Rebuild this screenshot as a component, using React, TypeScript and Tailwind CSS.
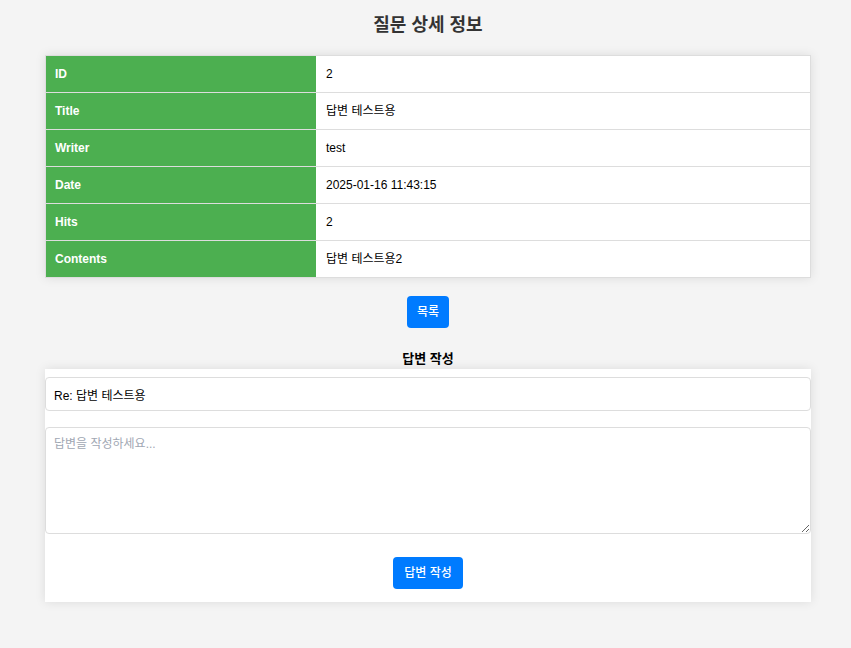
const rows: [string, string][] = [
  ["ID", "2"],
  ["Title", "답변 테스트용"],
  ["Writer", "test"],
  ["Date", "2025-01-16 11:43:15"],
  ["Hits", "2"],
  ["Contents", "답변 테스트용2"],
];

export default function App() {
  return (
    <div
      className="min-h-[648px] bg-[#f4f4f4] text-[12px] text-black"
      style={{ fontFamily: '"Liberation Sans", "Noto Sans CJK KR", sans-serif' }}
    >
      <div className="ml-[45px] w-[766px] pt-[13px] pb-[46px]">
        {/* Heading */}
        <h2 className="text-center text-[18px] font-bold leading-[24px] text-[#333]">
          질문 상세 정보
        </h2>

        {/* Detail table */}
        <div className="mt-[18px] border border-[#ddd] bg-white shadow-[0_0_10px_rgba(0,0,0,0.1)]">
          {rows.map(([label, value], i) => (
            <div
              key={label}
              className={
                i < rows.length - 1
                  ? "flex h-[37px] border-b border-[#ddd]"
                  : "flex h-[36px]"
              }
            >
              <div className="flex w-[270px] shrink-0 items-center bg-[#4caf50] pl-[9px] font-bold text-white">
                {label}
              </div>
              <div className="flex flex-1 items-center pl-[10px]">{value}</div>
            </div>
          ))}
        </div>

        {/* List button */}
        <div className="mt-[18px] flex justify-center">
          <button className="h-[32px] rounded-[4px] bg-[#007bff] px-[10px] text-[12px] font-medium text-white">
            목록
          </button>
        </div>

        {/* Answer form */}
        <h3 className="mt-[23px] text-center text-[13px] font-bold leading-[16px]">
          답변 작성
        </h3>
        <div className="mt-[2px] bg-white pt-[8px] pb-[13px] shadow-[0_0_10px_rgba(0,0,0,0.1)]">
          <input
            defaultValue="Re: 답변 테스트용"
            className="block h-[34px] w-full rounded-[4px] border border-[#ddd] px-[8px] text-[12px] outline-none"
          />
          <textarea
            placeholder="답변을 작성하세요..."
            className="mt-[16px] block h-[107px] w-full rounded-[4px] border border-[#ddd] px-[8px] py-[8px] text-[12px] leading-[16px] outline-none placeholder:text-[#a0a7b3]"
          />
          <div className="mt-[23px] flex justify-center">
            <button className="h-[32px] rounded-[4px] bg-[#007bff] px-[11px] text-[12px] font-medium text-white">
              답변 작성
            </button>
          </div>
        </div>
      </div>
    </div>
  );
}
